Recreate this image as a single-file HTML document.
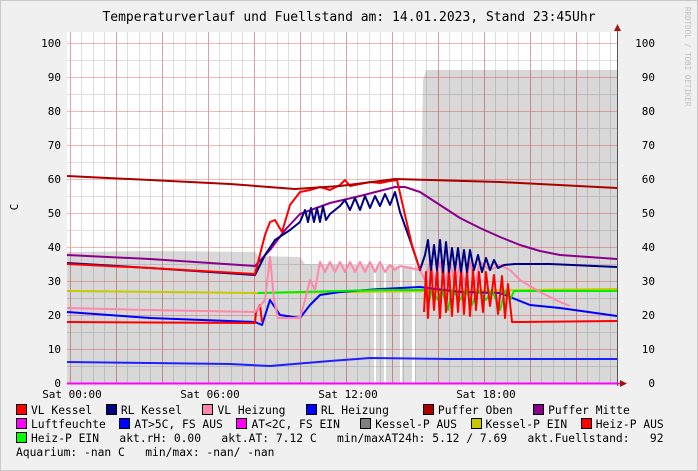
<!DOCTYPE html>
<html><head><meta charset="utf-8"><style>
body{margin:0;width:698px;height:471px;background:#f0f0f0;overflow:hidden;font-family:"DejaVu Sans Mono","Liberation Mono",monospace;}
svg{position:absolute;left:0;top:0}
.leg{position:absolute;font-size:11.3px;color:#000;white-space:pre;left:16px}
.sw{display:inline-block;width:9px;height:9px;border:1px solid #000;vertical-align:-1px;margin-right:4px}
</style></head><body>
<svg width="698" height="471" font-family="DejaVu Sans Mono, Liberation Mono, monospace">
<rect x="0.5" y="0.5" width="697" height="470" fill="#f0f0f0" stroke="#c8c8c8"/>
<rect x="67" y="32" width="550" height="351" fill="#fff"/>
<path d="M67,383 L67,252 L150,251 L255,252 L258,256 L300,257 L305,264 L420,266 L423,80 L426,70 L617,70 L617,383 Z" fill="#d8d8d8"/>
<g fill="#fff"><rect x="374" y="262" width="2" height="121"/><rect x="384" y="262" width="2" height="121"/><rect x="400" y="262" width="2" height="121"/><rect x="412" y="262" width="3" height="121"/></g>
<path stroke="rgba(0,0,0,0.13)" fill="none" d="M70.5,32V383M81.5,32V383M93.5,32V383M104.5,32V383M116.5,32V383M127.5,32V383M139.5,32V383M150.5,32V383M162.5,32V383M173.5,32V383M185.5,32V383M196.5,32V383M208.5,32V383M219.5,32V383M231.5,32V383M242.5,32V383M254.5,32V383M265.5,32V383M277.5,32V383M288.5,32V383M300.5,32V383M311.5,32V383M323.5,32V383M334.5,32V383M346.5,32V383M357.5,32V383M369.5,32V383M380.5,32V383M392.5,32V383M403.5,32V383M415.5,32V383M426.5,32V383M438.5,32V383M449.5,32V383M461.5,32V383M472.5,32V383M484.5,32V383M495.5,32V383M507.5,32V383M518.5,32V383M530.5,32V383M541.5,32V383M553.5,32V383M564.5,32V383M576.5,32V383M587.5,32V383M599.5,32V383M610.5,32V383 M67,366.5H617M67,332.5H617M67,298.5H617M67,264.5H617M67,230.5H617M67,196.5H617M67,162.5H617M67,128.5H617M67,94.5H617M67,60.5H617"/>
<path stroke="rgba(220,0,0,0.28)" fill="none" d="M70.5,32V383M116.5,32V383M162.5,32V383M208.5,32V383M254.5,32V383M300.5,32V383M346.5,32V383M392.5,32V383M438.5,32V383M484.5,32V383M530.5,32V383M576.5,32V383 M67,349.5H617M67,315.5H617M67,281.5H617M67,247.5H617M67,213.5H617M67,179.5H617M67,145.5H617M67,111.5H617M67,77.5H617M67,43.5H617"/>
<g fill="none" stroke-width="2" stroke-linejoin="round">
<polyline stroke="#c8c800" points="67,291 255,293 617,289"/>
<polyline stroke="#2020ff" points="67,362 150,363 230,364 270,366 330,361 370,358 450,359 617,359"/>
<polyline stroke="#0000ff" points="67,312 150,318 255,322 262,325 270,300 280,315 300,318 310,305 320,295 340,292 380,289 420,287 460,292 500,293 530,305 560,308 617,316"/>
<polyline stroke="#ff0000" points="67,322 255,323 256,312 260,305 262,322"/>
<polyline stroke="#00ee00" points="258,293 300,292 380,290 425,290 428,305 432,290 438,300 442,290 448,310 452,290 460,300 466,290 472,305 478,290 486,300 492,290 500,310 505,291 510,300 514,291 617,291"/>
<polyline stroke="#ff88aa" points="67,308 150,310 255,312 265,300 270,257 274,300 278,318 290,318 300,318 305,300 310,280 315,290 320,262 325,272 330,262 335,272 340,262 345,272 350,262 355,272 360,262 365,272 370,262 375,272 380,262 385,272 390,265 395,270 400,266 410,268 420,270 425,280 430,262 435,282 440,262 445,285 450,262 455,285 460,262 465,285 470,262 475,285 480,262 490,270 500,265 510,270 520,280 540,292 560,302 570,306"/>
<polyline stroke="#8b008b" points="67,255 150,259 255,266 270,250 285,230 300,214 330,203 360,196 395,187 405,187 420,192 440,205 460,218 480,228 500,237 520,245 540,251 560,255 617,259"/>
<polyline stroke="#ff0000" points="424,312 426,272 428,318 431,265 434,310 437,270 440,318 443,266 446,312 449,270 452,316 455,268 458,312 461,270 464,314 467,270 470,316 473,270 476,310 479,272 483,312 486,272 490,306 494,275 498,314 502,276 505,318 508,284 512,322 520,322 617,321"/>
<polyline stroke="#000080" points="67,263 150,268 255,275 265,255 275,240 290,230 300,222 305,210 308,222 311,208 314,222 317,208 320,222 323,206 326,220 330,214 335,210 340,206 345,200 350,210 355,198 360,210 365,196 370,208 375,196 380,206 385,194 390,205 395,192 400,212 410,240 420,270 425,255 428,240 431,270 434,245 437,270 440,240 443,272 446,242 449,272 452,248 455,270 458,248 461,272 464,250 467,272 470,250 474,270 478,255 482,272 486,258 490,270 494,260 498,268 504,265 515,264 550,264 617,267"/>
<polyline stroke="#ff0000" points="67,264 150,268 255,274 265,235 270,222 275,220 282,232 290,205 300,192 310,190 320,187 330,190 340,185 345,180 350,186 360,184 370,182 380,183 390,181 397,180 405,215 412,245 420,270"/>
<polyline stroke="#aa0000" points="67,176 150,180 230,184 295,189 340,186 380,181 395,179 430,180 500,182 617,188"/>
</g>
<line x1="67" y1="383.5" x2="622" y2="383.5" stroke="#ff00ff" stroke-width="2"/>
<line x1="617.5" y1="28" x2="617.5" y2="386" stroke="#555"/>
<path d="M614,31 L617.5,24 L621,31Z" fill="#aa1111"/>
<path d="M620,380 L627,383.5 L620,387Z" fill="#aa1111"/>
<g font-size="11" fill="#000" text-anchor="end">
<text x="61" y="47">100</text><text x="61" y="81">90</text><text x="61" y="115">80</text><text x="61" y="149">70</text><text x="61" y="183">60</text><text x="61" y="217">50</text><text x="61" y="251">40</text><text x="61" y="285">30</text><text x="61" y="319">20</text><text x="61" y="353">10</text><text x="61" y="387">0</text>
</g>
<g font-size="11" fill="#000" text-anchor="end">
<text x="655" y="47">100</text><text x="655" y="81">90</text><text x="655" y="115">80</text><text x="655" y="149">70</text><text x="655" y="183">60</text><text x="655" y="217">50</text><text x="655" y="251">40</text><text x="655" y="285">30</text><text x="655" y="319">20</text><text x="655" y="353">10</text><text x="655" y="387">0</text>
</g>
<g font-size="11" fill="#000" text-anchor="middle">
<text x="72" y="398">Sat 00:00</text><text x="210" y="398">Sat 06:00</text><text x="348" y="398">Sat 12:00</text><text x="486" y="398">Sat 18:00</text>
</g>
<text x="349" y="21" font-size="13" text-anchor="middle">Temperaturverlauf und Fuellstand am: 14.01.2023, Stand 23:45Uhr</text>
<text transform="translate(18,207) rotate(-90)" font-size="11" text-anchor="middle">C</text>
<text transform="translate(685,7) rotate(90)" font-size="7.5" fill="#c0c0c0">RRDTOOL / TOBI OETIKER</text>
</svg>
<div class="leg" style="top:404px"><span class="sw" style="background:#f00"></span>VL Kessel  <span class="sw" style="background:#000080"></span>RL Kessel   <span class="sw" style="background:#ff88aa"></span>VL Heizung   <span class="sw" style="background:#00f"></span>RL Heizung     <span class="sw" style="background:#aa0000"></span>Puffer Oben   <span class="sw" style="background:#8b008b"></span>Puffer Mitte</div>
<div class="leg" style="top:418px"><span class="sw" style="background:#f0f"></span>Luftfeuchte  <span class="sw" style="background:#00f"></span>AT&gt;5C, FS AUS  <span class="sw" style="background:#f0f"></span>AT&lt;2C, FS EIN   <span class="sw" style="background:#808080"></span>Kessel-P AUS  <span class="sw" style="background:#c8c800"></span>Kessel-P EIN  <span class="sw" style="background:#f00"></span>Heiz-P AUS</div>
<div class="leg" style="top:432px"><span class="sw" style="background:#0f0"></span>Heiz-P EIN   akt.rH: 0.00   akt.AT: 7.12 C   min/maxAT24h: 5.12 / 7.69   akt.Fuellstand:   92</div>
<div class="leg" style="top:446px">Aquarium: -nan C   min/max: -nan/ -nan</div>
</body></html>
